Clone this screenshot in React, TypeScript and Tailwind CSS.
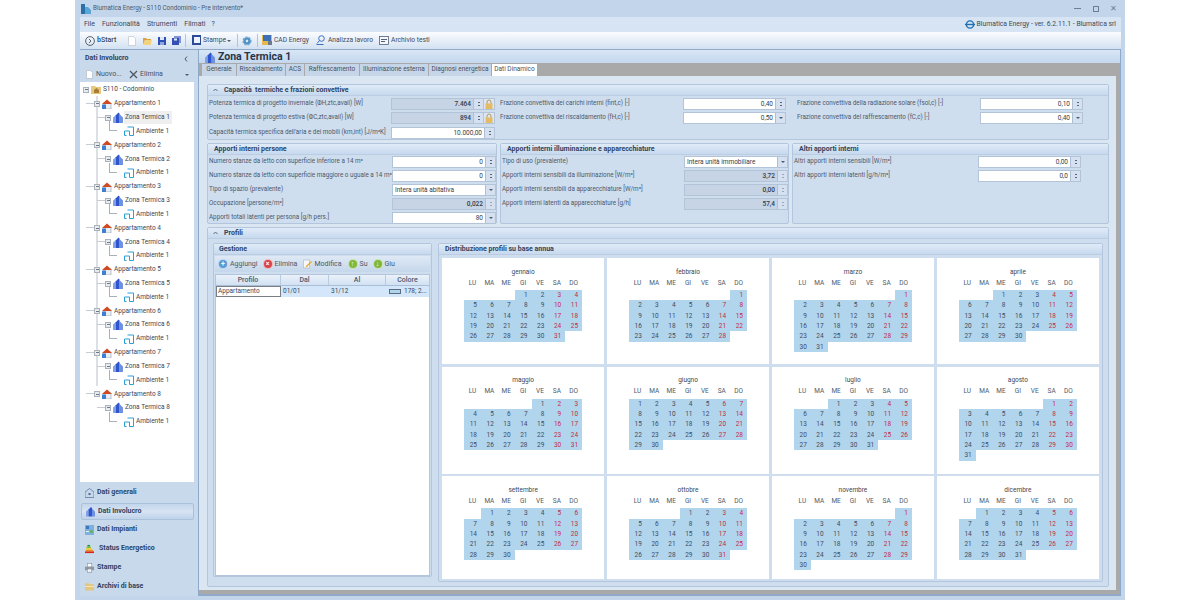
import type { ReactNode } from "react";

const font = "font-['Roboto',sans-serif]";

const months: [string, number, number][] = [
  ["gennaio", 3, 31],
  ["febbraio", 6, 28],
  ["marzo", 6, 31],
  ["aprile", 2, 30],
  ["maggio", 4, 31],
  ["giugno", 0, 30],
  ["luglio", 2, 31],
  ["agosto", 5, 31],
  ["settembre", 1, 30],
  ["ottobre", 3, 31],
  ["novembre", 6, 30],
  ["dicembre", 1, 31],
];

const weekDays = ["LU", "MA", "ME", "GI", "VE", "SA", "DO"];

function Month({ name, offset, days }: { name: string; offset: number; days: number }) {
  return (
    <div className="flex flex-col items-center bg-white pt-[8.5px]">
      <div className="h-[10px] text-[6.5px] leading-[10px] text-[#3d4654]">{name}</div>
      <div className="mt-[1px] grid w-[118px] grid-cols-7 text-center text-[6.5px] leading-[11px] text-[#4d5a6c]">
        {weekDays.map((d) => (
          <div key={d}>{d}</div>
        ))}
      </div>
      <div className="mt-[1.5px] grid w-[118px] grid-cols-7 text-[6.5px] leading-[10.35px]">
        {Array.from({ length: offset }).map((_, i) => (
          <div key={i} />
        ))}
        {Array.from({ length: days }).map((_, i) => {
          const col = (i + offset) % 7;
          return (
            <div key={i} className={`bg-[#b2d5ee] pr-[4px] text-right ${col >= 5 ? "text-[#c42a45]" : "text-[#3f4c60]"}`}>
              {i + 1}
            </div>
          );
        })}
      </div>
    </div>
  );
}

function Spin({ grey }: { grey?: boolean }) {
  return (
    <div className="flex h-full w-[10px] flex-col items-center justify-center gap-[2px] border-l border-[#aebfd4] bg-[#d5e1f0]">
      <div className={`h-[1px] w-[2px] ${grey ? "bg-[#9aa8ba]" : "bg-[#59667a]"}`} />
      <div className={`h-[1px] w-[2px] ${grey ? "bg-[#9aa8ba]" : "bg-[#59667a]"}`} />
    </div>
  );
}

function Drop() {
  return (
    <div className="flex h-full w-[10px] items-center justify-center border-l border-[#aebfd4] bg-[#d5e1f0]">
      <div className="h-0 w-0 border-x-[2px] border-t-[2px] border-x-transparent border-t-[#4d5a6c]" />
    </div>
  );
}

function Lock() {
  return (
    <div className="flex h-[12px] w-[11px] items-center justify-center border border-l-0 border-[#b3c4d9] bg-[#dce7f3]">
      <svg width="8" height="10" viewBox="0 0 8 10">
        <path d="M2 5V3a2 2 0 0 1 4 0v2" fill="none" stroke="#b89a5c" strokeWidth="1" />
        <rect x="0.500" y="4.500" width="7" height="5.500" fill="#e5bb63" />
      </svg>
    </div>
  );
}

function Field({
  value,
  w,
  kind = "spin",
  grey,
  left,
  lock,
}: {
  value: string;
  w: string;
  kind?: "spin" | "drop";
  grey?: boolean;
  left?: boolean;
  lock?: boolean;
}) {
  return (
    <div className="relative flex items-center">
      <div className={`flex h-[12px] items-center border border-[#b3c4d9] ${w} ${grey ? "bg-[#c6d4e5]" : "bg-white"}`}>
        <div
          className={`min-w-0 flex-1 px-[2px] text-[6.5px] leading-[10px] text-[#343d4a] ${left ? "text-left" : "text-right"} ${grey ? "font-medium" : ""}`}
        >
          {value}
        </div>
        {kind === "spin" ? <Spin grey={grey && !lock} /> : <Drop />}
      </div>
      {lock && <Lock />}
    </div>
  );
}

function Row({ label, labelW, h = "h-[14px]", children }: { label: string; labelW: string; h?: string; children?: ReactNode }) {
  return (
    <div className={`flex items-center ${h}`}>
      <div className={`${labelW} shrink-0 whitespace-nowrap text-[6.3px] text-[#4c586a]`}>{label}</div>
      {children}
    </div>
  );
}

function GroupHeader({ children, chevron, pl = "pl-[6px]" }: { children: ReactNode; chevron?: boolean; pl?: string }) {
  return (
    <div
      className={`flex h-[11px] items-center gap-[6px] border-b border-[#bccde2] bg-gradient-to-b from-[#e0ebf7] to-[#c6d9ef] text-[7px] font-bold text-[#2f4361] ${pl}`}
    >
      {chevron && <Chevron />}
      <span>{children}</span>
    </div>
  );
}

function Chevron() {
  return (
    <svg width="5" height="4" viewBox="0 0 5 4">
      <path d="M.5 3 2.500 1l2 2" fill="none" stroke="#4b5d75" strokeWidth="0.9" />
    </svg>
  );
}

function HouseIcon() {
  return (
    <svg width="10" height="10" viewBox="0 0 10 10">
      <rect x="2" y="4" width="7" height="6" fill="#e9eef5" stroke="#7d8da3" strokeWidth="0.5" />
      <rect x="0" y="5.500" width="4" height="4.500" fill="#3f7fd1" />
      <path d="M0 5 5 .5 10 5Z" fill="#cf4a21" />
    </svg>
  );
}

function ZoneIcon() {
  return (
    <svg width="10" height="11" viewBox="0 0 9 10">
      <path d="M0 5 2.500 3V10H0Z" fill="#7f9fe6" />
      <path d="M2.500 3 5 .5 6 1.500V10H2.500Z" fill="#2f55cc" />
      <path d="M6 2 9 5V10H6Z" fill="#6d90e0" />
    </svg>
  );
}

function RoomIcon() {
  return (
    <svg width="10" height="10" viewBox="0 0 10 10" fill="none" stroke="#2b9fd8" strokeWidth="1">
      <path d="M3.500 1h6v8.500h-4V5H.5v4.500h2" />
    </svg>
  );
}

function Expander() {
  return (
    <div className="relative z-10 flex h-[6px] w-[6px] items-center justify-center border border-[#a9b1bb] bg-[#e9ecef]">
      <div className="h-[1px] w-[3px] bg-[#6d7785]" />
    </div>
  );
}

function TreeRow({
  depth,
  icon,
  text,
  selected,
  hasChildren = true,
}: {
  depth: number;
  icon: ReactNode;
  text: string;
  selected?: boolean;
  hasChildren?: boolean;
}) {
  const pad = ["pl-[3px]", "pl-[14px]", "pl-[25px]", "pl-[36px]"][depth];
  return (
    <div className={`relative flex h-[13.84px] items-center ${pad}`}>
      {depth > 0 && depth < 3 && <div className="absolute top-[6px] h-[1px] w-[8px] bg-[#c8ccd2]" style={{ left: 6 + (depth - 1) * 11 }} />}
      {depth === 3 && <div className="absolute left-[29px] top-[-3px] h-[10px] w-[8px] border-b border-l border-[#aab0b8]" />}
      <div className="flex w-[8px] shrink-0 justify-start">{hasChildren && <Expander />}</div>
      <div className="flex w-[10px] shrink-0 items-center justify-center">{icon}</div>
      <div className={`ml-[1px] whitespace-nowrap px-[1px] text-[6.5px] leading-[13px] text-[#3b4656] ${selected ? "bg-[#efefef] pr-[2px]" : ""}`}>
        {text}
      </div>
    </div>
  );
}

function Tree() {
  return (
    <div className="relative h-[400px] overflow-hidden bg-white pt-[1px]">
      <div className="absolute left-[16px] top-[14px] h-[290px] w-[2px] bg-[#dcdfe3]" />
      <TreeRow
        depth={0}
        text="S110 - Codominio"
        icon={
          <svg width="10" height="9" viewBox="0 0 10 9">
            <path d="M0 1h4l1 1h5v7H0Z" fill="#e8c97a" />
            <path d="M3 5 5.500 3 8 5v3H3Z" fill="#a97b3c" />
          </svg>
        }
      />
      {[1, 2, 3, 4, 5, 6, 7, 8].map((n) => (
        <div key={n}>
          <TreeRow depth={1} text={`Appartamento ${n}`} icon={<HouseIcon />} />
          <TreeRow depth={2} text={`Zona Termica ${n}`} icon={<ZoneIcon />} selected={n === 1} />
          <TreeRow depth={3} text="Ambiente 1" icon={<RoomIcon />} hasChildren={false} />
        </div>
      ))}
    </div>
  );
}

function NavItem({ icon, text, selected, mt, ml }: { icon: ReactNode; text: string; selected?: boolean; mt: string; ml?: string }) {
  return (
    <div
      className={`flex h-[17px] items-center gap-[3px] rounded-[2px] text-[7px] font-bold text-[#2f4361] ${mt} ${
        selected ? "ml-[1px] border border-[#aac1dc] bg-gradient-to-b from-[#c3d6ec] via-[#d7e4f3] to-[#bed2e9] pl-[4px]" : "pl-[5px]"
      }`}
    >
      <div className="flex w-[9px] justify-center">{icon}</div>
      <span className={ml}>{text}</span>
    </div>
  );
}

function Sidebar() {
  return (
    <div className="flex w-[114px] shrink-0 flex-col">
      <div className="flex h-[17px] items-center justify-between pl-[5px] pr-[6px] text-[7px] font-bold text-[#2f4361]">
        <span>Dati Involucro</span>
        <svg width="4" height="6" viewBox="0 0 4 6">
          <path d="M3 .5 1 3l2 2.500" fill="none" stroke="#4d5a6c" />
        </svg>
      </div>
      <div className="flex h-[15px] items-center pl-[6px] text-[7px] text-[#475366]">
        <svg width="7" height="9" viewBox="0 0 7 9">
          <path d="M.5.5h4l2 2v6h-6Z" fill="#fff" stroke="#aab4c0" strokeWidth="0.6" />
        </svg>
        <span className="ml-[3px] w-[33px]">Nuovo...</span>
        <svg width="9" height="9" viewBox="0 0 9 9" fill="none" stroke="#4f5661" strokeWidth="1.300">
          <path d="M1 1l7 7M8 1 1 8" />
        </svg>
        <span className="ml-[2px] w-[45px]">Elimina</span>
        <div className="h-0 w-0 border-x-[2px] border-t-[2px] border-x-transparent border-t-[#4d5a6c]" />
      </div>
      <Tree />
      <NavItem
        mt="mt-[2px]"
        text="Dati generali"
        icon={
          <svg width="9" height="10" viewBox="0 0 9 10">
            <path d="M0 4 4.500.5 9 4v5.500H0Z" fill="#c9d6e6" stroke="#4a6da0" strokeWidth="0.7" />
            <rect x="3.500" y="5" width="2" height="2" fill="#3f6db0" />
          </svg>
        }
      />
      <NavItem mt="mt-[2px]" selected text="Dati Involucro" icon={<ZoneIcon />} />
      <NavItem
        mt="mt-[1px]"
        text="Dati Impianti"
        icon={
          <svg width="9" height="10" viewBox="0 0 9 10">
            <rect width="9" height="10" fill="#7fb0dc" />
            <rect x="1" y="1" width="3" height="3" fill="#3b78bb" />
            <rect x="5" y="5" width="3" height="3" fill="#66b07a" />
            <rect x="1" y="6" width="3" height="1" fill="#e8eef5" />
          </svg>
        }
      />
      <NavItem
        mt="mt-[2px]"
        text="Status Energetico"
        ml="ml-[2px]"
        icon={
          <svg width="11" height="10" viewBox="0 0 11 10">
            <rect x="3" y="0" width="3" height="2" fill="#1e8e3e" />
            <rect x="2" y="2" width="5" height="2" fill="#7ab82e" />
            <rect x="1.500" y="4" width="7" height="2" fill="#f2d21f" />
            <rect x="1" y="6" width="9" height="2" fill="#ef8a1d" />
            <rect x="0" y="8" width="11" height="2" fill="#d9261c" />
          </svg>
        }
      />
      <NavItem
        mt="mt-[2px]"
        text="Stampe"
        icon={
          <svg width="10" height="10" viewBox="0 0 10 10">
            <rect x="2.500" y="0" width="5" height="4" fill="#fff" stroke="#7e8794" strokeWidth="0.6" />
            <rect x="0" y="3.500" width="10" height="4" fill="#8f97a3" />
            <rect x="2.500" y="6" width="5" height="4" fill="#eef0f3" stroke="#7e8794" strokeWidth="0.6" />
          </svg>
        }
      />
      <NavItem
        mt="mt-[2px]"
        text="Archivi di base"
        icon={
          <svg width="10" height="9" viewBox="0 0 10 9">
            <path d="M0 1h4l1 1h5v7H0Z" fill="#e3c77f" />
            <rect x="0" y="4" width="10" height="1" fill="#f6e9bf" />
          </svg>
        }
      />
    </div>
  );
}

function TBtn({ icon, text, ml }: { icon: ReactNode; text: string; ml: string }) {
  return (
    <div className={`flex items-center gap-[2px] whitespace-nowrap text-[6.7px] text-[#3e4a5b] ${ml}`}>
      {icon}
      <span>{text}</span>
    </div>
  );
}

function Sep({ ml }: { ml: string }) {
  return <div className={`h-[13px] w-[1px] bg-[#b4c4d8] ${ml}`} />;
}

function Toolbar() {
  return (
    <div className="flex h-[18px] items-center border-b border-[#8fa9c8] bg-gradient-to-b from-[#fbfcfe] to-[#d3e1f2] pl-[5px]">
      <svg width="10" height="10" viewBox="0 0 10 10" fill="none" stroke="#3a3f47" strokeWidth="0.8">
        <circle cx="5" cy="5" r="4.400" />
        <path d="M4 3l2 2-2 2" />
      </svg>
      <span className="ml-[2px] w-[31px] text-[7px] font-medium text-[#3e4a5b]">
        <span className="font-bold text-[#1c5fae]">b</span>Start
      </span>
      <svg width="8" height="10" viewBox="0 0 8 10">
        <path d="M.5.5h5l2 2v7h-7Z" fill="#fff" stroke="#b4bcc7" strokeWidth="0.6" />
      </svg>
      <svg className="ml-[7px]" width="9" height="8" viewBox="0 0 9 8">
        <path d="M0 1h3l1 1h4v1H2L0 8Z" fill="#d9a441" />
        <path d="M2 3h7L7.500 8H0Z" fill="#f3d27c" />
      </svg>
      <svg className="ml-[6px]" width="8" height="8" viewBox="0 0 8 8">
        <rect width="8" height="8" fill="#2e4fb3" />
        <rect x="2" y="0" width="4" height="3" fill="#dfe6f5" />
        <rect x="2" y="5" width="4" height="3" fill="#8ea6de" />
      </svg>
      <svg className="ml-[6px]" width="9" height="9" viewBox="0 0 9 9">
        <rect x="2" y="0" width="7" height="7" fill="#7f92d8" />
        <rect x="0" y="2" width="7" height="7" fill="#3450b5" />
        <rect x="2" y="2.500" width="3" height="2" fill="#e4e9f7" />
      </svg>
      <Sep ml="ml-[4px]" />
      <TBtn
        ml="ml-[6px]"
        text="Stampe"
        icon={
          <svg width="9" height="10" viewBox="0 0 9 10">
            <rect width="9" height="10" fill="#2c4a9a" />
            <rect x="2" y="2" width="6" height="6" fill="#eef2fa" />
          </svg>
        }
      />
      <div className="ml-[1px] h-0 w-0 border-x-[2px] border-t-[2px] border-x-transparent border-t-[#4d5a6c]" />
      <Sep ml="ml-[6px]" />
      <svg className="ml-[4px]" width="10" height="10" viewBox="0 0 10 10">
        <circle cx="5" cy="5" r="3.600" fill="#3f84bd" stroke="#6fa9d6" strokeWidth="2" strokeDasharray="2 1" />
        <circle cx="5" cy="5" r="1.400" fill="#d8e8f5" />
      </svg>
      <Sep ml="ml-[5px]" />
      <TBtn
        ml="ml-[4px]"
        text="CAD Energy"
        icon={
          <svg width="10" height="10" viewBox="0 0 10 10">
            <rect width="10" height="10" fill="#e5b94d" />
            <rect x="1" y="0" width="8" height="6" fill="#3e70b8" />
            <rect x="6" y="6" width="4" height="4" fill="#6f7a89" />
          </svg>
        }
      />
      <TBtn
        ml="ml-[7px]"
        text="Analizza lavoro"
        icon={
          <svg width="10" height="10" viewBox="0 0 10 10" fill="none" stroke="#3a6fc0" strokeWidth="1">
            <circle cx="5.500" cy="3.500" r="2.800" />
            <path d="M3.500 5.500 1 8.500M.5 9.500h7" />
          </svg>
        }
      />
      <TBtn
        ml="ml-[6px]"
        text="Archivio testi"
        icon={
          <svg width="10" height="9" viewBox="0 0 10 9">
            <rect x=".5" y=".5" width="9" height="8" fill="#f4f6fa" stroke="#54627a" strokeWidth="0.8" />
            <rect x="2" y="3" width="6" height="1" fill="#54627a" />
            <rect x="2" y="5" width="4" height="1" fill="#54627a" />
          </svg>
        }
      />
    </div>
  );
}

const tabs: [string, string][] = [
  ["Generale", "w-[34px]"],
  ["Riscaldamento", "w-[48px]"],
  ["ACS", "w-[18px]"],
  ["Raffrescamento", "w-[54px]"],
  ["Illuminazione esterna", "w-[68px]"],
  ["Diagnosi energetica", "w-[62px]"],
];

function RoundIcon({ bg, mark }: { bg: string; mark: string }) {
  return (
    <div className={`flex h-[10px] w-[10px] items-center justify-center rounded-full border border-white/60 text-[7px] font-bold leading-none text-white ${bg}`}>
      {mark}
    </div>
  );
}

function GestioneBtn({ icon, text, ml }: { icon: ReactNode; text: string; ml: string }) {
  return (
    <div className={`flex items-center gap-[2px] text-[7px] text-[#4c586a] ${ml}`}>
      {icon}
      <span>{text}</span>
    </div>
  );
}

function Gestione() {
  return (
    <div className="flex h-[334px] w-[219px] shrink-0 flex-col rounded-[2px] border border-[#b3c6de] bg-[#cfdeef]">
      <GroupHeader pl="pl-[5px]">Gestione</GroupHeader>
      <div className="mx-[1px] mt-[1px] flex h-[16px] items-center bg-gradient-to-b from-[#dfe9f5] to-[#c5d7eb] pl-[3px]">
        <GestioneBtn ml="" text="Aggiungi" icon={<RoundIcon bg="bg-[#5a9ad4]" mark="+" />} />
        <GestioneBtn ml="ml-[5px]" text="Elimina" icon={<RoundIcon bg="bg-[#d9434a]" mark="×" />} />
        <GestioneBtn
          ml="ml-[6px]"
          text="Modifica"
          icon={
            <svg width="9" height="10" viewBox="0 0 9 10">
              <path d="M.5 1h6v8h-6Z" fill="#f7f8fa" stroke="#aab3c0" strokeWidth="0.6" />
              <path d="M3 7l5-5 1 1-5 5-1.500.3Z" fill="#e6a93d" />
            </svg>
          }
        />
        <GestioneBtn ml="ml-[6px]" text="Su" icon={<RoundIcon bg="bg-[#80b83c]" mark="↑" />} />
        <GestioneBtn ml="ml-[5px]" text="Giu" icon={<RoundIcon bg="bg-[#80b83c]" mark="↓" />} />
      </div>
      <div className="mx-[1px] mt-[2px] flex flex-1 flex-col border border-[#b3c6de] bg-white">
        <div className="flex h-[11px] border-b border-[#a9bed8] bg-gradient-to-b from-[#eaf1fa] to-[#d2e1f2] text-center text-[7px] font-medium leading-[10px] text-[#4a5a70]">
          <div className="w-[65px] border-r border-[#b9cbe0]">Profilo</div>
          <div className="w-[48px] border-r border-[#b9cbe0]">Dal</div>
          <div className="w-[57px] border-r border-[#b9cbe0]">Al</div>
          <div className="flex-1">Colore</div>
        </div>
        <div className="flex h-[11px] bg-[#d4e6fa] text-[6.5px] leading-[9px] text-[#3d4757]">
          <div className="w-[65px] border border-[#7a7f86] bg-white pl-[1px]">Appartamento</div>
          <div className="w-[48px] pl-[2px] pt-[1px]">01/01</div>
          <div className="w-[57px] pl-[2px] pt-[1px]">31/12</div>
          <div className="flex flex-1 items-center whitespace-nowrap pl-[3px]">
            <div className="mr-[3px] h-[5px] w-[12px] border border-[#5b6c80] bg-[#b2d5ee]" />
            178; 2...
          </div>
        </div>
      </div>
    </div>
  );
}

function Distribuzione() {
  return (
    <div className="flex h-[339px] flex-1 flex-col rounded-[2px] border border-[#b3c6de] bg-[#cfdeef]">
      <GroupHeader pl="pl-[6px]">Distribuzione profili su base annua</GroupHeader>
      <div className="grid flex-1 grid-cols-4 grid-rows-[106px_107px_1fr] gap-[2.700px] px-[3px] pb-[2px] pt-[3px]">
        {months.map(([name, offset, days]) => (
          <Month key={name} name={name} offset={offset} days={days} />
        ))}
      </div>
    </div>
  );
}

function Content() {
  return (
    <div className="flex flex-1 flex-col border-x border-b-2 border-[#8fa9c8] bg-[#a9a9a9]">
      <div className="flex h-[13px] items-center gap-[3px] bg-gradient-to-b from-[#d9e7f6] to-[#c3d7ee] pl-[6px] pt-[1px] text-[10.5px] font-bold text-[#27364b]">
        <ZoneIcon />
        <span>Zona Termica 1</span>
      </div>
      <div className="flex h-[13px] pl-[3px] pt-[1px]">
        {tabs.map(([t, w]) => (
          <div key={t} className={`mr-[1px] flex items-center justify-center whitespace-nowrap bg-[#c6d6e8] text-[6.5px] text-[#46525f] ${w}`}>
            {t}
          </div>
        ))}
        <div className="flex w-[45px] items-center justify-center whitespace-nowrap bg-white text-[6.5px] text-[#46525f]">Dati Dinamico</div>
      </div>
      <div className="mb-[4px] mr-[4px] flex flex-1 flex-col bg-[#dbe6f3] pl-[8px] pr-[7px] pt-[8px]">
        <div className="h-[56px] rounded-[2px] border border-[#b3c6de] bg-[#cfdeef]">
          <GroupHeader chevron pl="pl-[5px]">
            Capacità&nbsp; termiche e frazioni convettive
          </GroupHeader>
          <div className="flex pl-[1px] pt-[1px]">
            <div className="w-[291px] shrink-0">
              <Row labelW="w-[182px]" label="Potenza termica di progetto invernale (ΦH,ztc,avail) [W]">
                <Field value="7.464" grey lock w="w-[93px]" />
              </Row>
              <Row labelW="w-[182px]" label="Potenza termica di progetto estiva (ΦC,ztc,avail) [W]">
                <Field value="894" grey lock w="w-[93px]" />
              </Row>
              <Row labelW="w-[182px]" h="h-[15px]" label="Capacità  termica specifica dell'aria e dei mobili (km,int) [J/m³K]">
                <Field value="10.000,00" w="w-[104px]" />
              </Row>
            </div>
            <div className="w-[297px] shrink-0">
              <Row labelW="w-[183px]" label="Frazione convettiva dei carichi interni (fint,c) [-]">
                <Field value="0,40" w="w-[103px]" />
              </Row>
              <Row labelW="w-[183px]" label="Frazione convettiva del riscaldamento (fH,c) [-]">
                <Field value="0,50" kind="drop" w="w-[103px]" />
              </Row>
            </div>
            <div>
              <Row labelW="w-[183px]" label="Frazione convettiva della radiazione solare (fsol,c) [-]">
                <Field value="0,10" w="w-[103px]" />
              </Row>
              <Row labelW="w-[183px]" label="Frazione convettiva del raffrescamento (fC,c) [-]">
                <Field value="0,40" kind="drop" w="w-[103px]" />
              </Row>
            </div>
          </div>
        </div>
        <div className="mt-[3px] flex h-[81px] gap-[3px]">
          <div className="w-[290px] shrink-0 rounded-[2px] border border-[#b3c6de] bg-[#cfdeef]">
            <GroupHeader>Apporti interni persone</GroupHeader>
            <div className="pl-[1px]">
              <Row labelW="w-[183px]" label="Numero stanze da letto con superficie inferiore a 14 m²">
                <Field value="0" w="w-[104px]" />
              </Row>
              <Row labelW="w-[183px]" label="Numero stanze da letto con superficie maggiore o uguale a 14 m²">
                <Field value="0" w="w-[104px]" />
              </Row>
              <Row labelW="w-[183px]" label="Tipo di spazio (prevalente)">
                <Field value="Intera unità abitativa" kind="drop" left w="w-[104px]" />
              </Row>
              <Row labelW="w-[183px]" label="Occupazione [persone/m²]">
                <Field value="0,022" grey w="w-[104px]" />
              </Row>
              <Row labelW="w-[183px]" label="Apporti totali latenti per persona [g/h pers.]">
                <Field value="80" kind="drop" w="w-[104px]" />
              </Row>
            </div>
          </div>
          <div className="w-[289px] shrink-0 rounded-[2px] border border-[#b3c6de] bg-[#cfdeef]">
            <GroupHeader>Apporti interni illuminazione e apparecchiature</GroupHeader>
            <div className="pl-[1px]">
              <Row labelW="w-[182px]" label="Tipo di uso (prevalente)">
                <Field value="Intera unità immobiliare" kind="drop" left w="w-[104px]" />
              </Row>
              <Row labelW="w-[182px]" label="Apporti interni sensibili da illuminazione [W/m²]">
                <Field value="3,72" grey w="w-[104px]" />
              </Row>
              <Row labelW="w-[182px]" label="Apporti interni sensibili da apparecchiature [W/m²]">
                <Field value="0,00" grey w="w-[104px]" />
              </Row>
              <Row labelW="w-[182px]" label="Apporti interni latenti da apparecchiature [g/h]">
                <Field value="57,4" grey w="w-[104px]" />
              </Row>
            </div>
          </div>
          <div className="flex-1 rounded-[2px] border border-[#b3c6de] bg-[#cfdeef]">
            <GroupHeader>Altri apporti interni</GroupHeader>
            <div className="pl-[1px]">
              <Row labelW="w-[184px]" label="Altri apporti interni sensibili [W/m²]">
                <Field value="0,00" w="w-[103px]" />
              </Row>
              <Row labelW="w-[184px]" label="Altri apporti interni latenti [g/h/m²]">
                <Field value="0,0" w="w-[103px]" />
              </Row>
            </div>
          </div>
        </div>
        <div className="mt-[3px] rounded-[2px] border border-[#b3c6de] bg-[#cfdeef]">
          <GroupHeader chevron pl="pl-[5px]">
            Profili
          </GroupHeader>
          <div className="flex h-[347px] gap-[6px] px-[5px] pt-[4px]">
            <Gestione />
            <Distribuzione />
          </div>
        </div>
      </div>
    </div>
  );
}

export default function App() {
  return (
    <div className={`h-[600px] w-[1200px] overflow-hidden bg-white px-[75px] ${font}`}>
      <div className="flex h-[600px] w-[1050px] flex-col overflow-hidden bg-[#c2d5ea]">
        <div className="flex h-[17px] items-center pl-[6px] pr-[8px] text-[6.3px] text-[#4c586a]">
          <svg width="10" height="10" viewBox="0 0 10 10">
            <rect width="4" height="10" fill="#2b6ea8" />
            <path d="M4 3h3l3 3v4H4Z" fill="#58a6d6" />
          </svg>
          <span className="ml-[2px] flex-1">Blumatica Energy - S110 Condominio - Pre intervento*</span>
          <div className="h-[1px] w-[7px] bg-[#6f7f93]" />
          <div className="ml-[12px] h-[6px] w-[6px] border border-[#6f7f93]" />
          <span className="ml-[11px] text-[8px] text-[#6f7f93]">✕</span>
        </div>
        <div className="ml-[5px] mr-[4px] flex h-[15px] items-center bg-[#d6e4f3] pl-[4px] pr-[5px] text-[7px] text-[#3e4a5b]">
          <span>File</span>
          <span className="ml-[7px]">Funzionalità</span>
          <span className="ml-[7px]">Strumenti</span>
          <span className="ml-[7px]">Filmati</span>
          <span className="ml-[6px]">?</span>
          <svg className="ml-auto" width="10" height="9" viewBox="0 0 10 9" fill="none" stroke="#1f6fb3" strokeWidth="1.400">
            <circle cx="5" cy="4.500" r="3.600" />
            <path d="M0 4.500h10" />
          </svg>
          <span className="ml-[2px] text-[6.8px]">Blumatica Energy - ver. 6.2.11.1 - Blumatica srl</span>
        </div>
        <div className="ml-[5px] mr-[4px]">
          <Toolbar />
        </div>
        <div className="mb-[4px] ml-[5px] mr-[4px] flex flex-1 gap-[4px] overflow-hidden bg-[#c9d9ec]">
          <Sidebar />
          <Content />
        </div>
      </div>
    </div>
  );
}
